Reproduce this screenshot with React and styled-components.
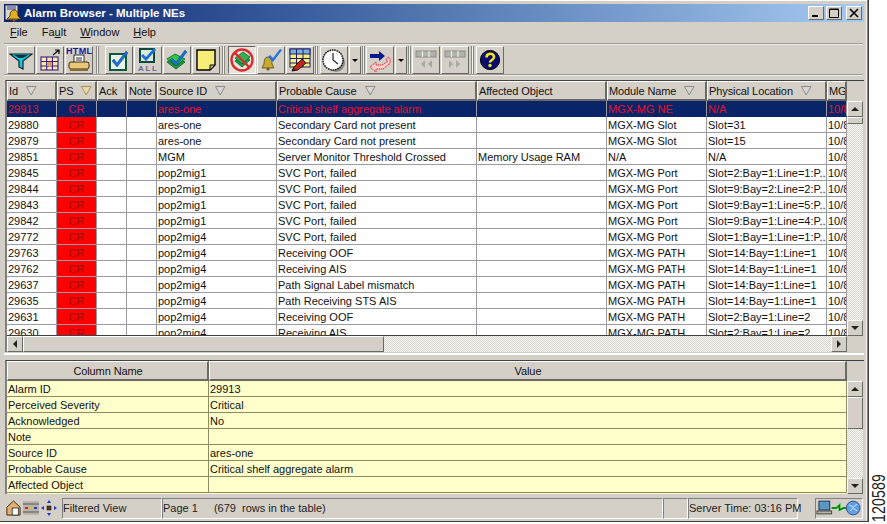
import React from 'react';
import styled, { createGlobalStyle } from 'styled-components';

const GlobalStyle = createGlobalStyle`
   html, body {
      margin: 0;
      padding: 0;
      background: #fff;
   }
   body {
      font-family: "Liberation Sans", Arial, sans-serif;
      font-size: 11px;
   }
`;

const FACE = '#d4d0c8';
const HATCH = `repeating-conic-gradient(${FACE} 0 25%, #fff 0 50%) 0 0 / 2px 2px`;
const RAISED = `
   border-style: solid;
   border-width: 1px;
   border-color: #fff #6a6a64 #6a6a64 #fff;
`;

const Page = styled.div`
   width: 887px;
   height: 524px;
   display: flex;
   align-items: flex-start;
   overflow: hidden;
   background: #fff;
`;

const Window = styled.div`
   width: 869px;
   height: 522px;
   box-sizing: border-box;
   flex: none;
   display: flex;
   flex-direction: column;
   background: ${FACE};
   padding: 4px 4px 0 4px;
   border-right: 1px solid #404040;
   border-bottom: 1px solid #404040;
   box-shadow: inset -1px 0 0 #808080, inset -2px 0 0 #f2f0ea, inset 0 1px 0 #ffffff;
`;

const SideNumber = styled.div`
   flex: 1;
   height: 524px;
   display: flex;
   align-items: flex-end;
   justify-content: center;
   padding-bottom: 2px;
   box-sizing: border-box;
   font-size: 14px;
   letter-spacing: 0.2px;
   color: #222;
   span {
      writing-mode: vertical-rl;
      transform: rotate(180deg) scaleX(1.3);
   }
`;

const TitleBar = styled.div`
   height: 18px;
   flex: none;
   display: flex;
   align-items: center;
   gap: 2px;
   padding: 0 2px 0 1px;
   background: linear-gradient(90deg, #0a246a 0%, #3a5f9e 35%, #a6caf0 100%);
   color: #fff;
   font-size: 11.5px;
   font-weight: bold;
`;

const TitleText = styled.span`
   flex: 1;
   white-space: nowrap;
`;

const WinButton = styled.div`
   width: 16px;
   height: 14px;
   box-sizing: border-box;
   margin-left: ${(p) => (p.$gap ? '2px' : '0')};
   background: ${FACE};
   ${RAISED}
   display: flex;
   align-items: center;
   justify-content: center;
`;

const MenuBar = styled.div`
   height: 21px;
   flex: none;
   display: flex;
   align-items: center;
   gap: 14px;
   padding: 0 0 1px 6px;
   box-sizing: border-box;
   font-size: 11px;
   color: #111;
   u { text-decoration: underline; }
`;

const Toolbar = styled.div`
   height: 33px;
   flex: none;
   box-sizing: border-box;
   display: flex;
   align-items: center;
   padding: 1px 0 0 3px;
   gap: 1px;
   border-top: 2px groove #efede8;
   border-bottom: 2px groove #efede8;
   margin-right: 1px;
`;

const ToolButton = styled.div`
   width: 28px;
   height: 28px;
   box-sizing: border-box;
   flex: none;
   display: flex;
   align-items: center;
   justify-content: center;
   ${RAISED}
   ${(p) => p.$pressed && `
      border-color: #6a6a64 #fff #fff #6a6a64;
      background: #e6e3dd;
   `}
`;

const DropButton = styled.div`
   width: 12px;
   height: 28px;
   box-sizing: border-box;
   flex: none;
   display: flex;
   align-items: center;
   justify-content: center;
   ${RAISED}
   &::after {
      content: '';
      border-left: 3px solid transparent;
      border-right: 3px solid transparent;
      border-top: 3px solid #000;
   }
`;

const ToolSep = styled.div`
   width: 3px;
   height: 28px;
   flex: none;
   box-sizing: border-box;
   margin: 0 ${(p) => p.$right}px 0 ${(p) => p.$left}px;
   background: #f4f2ee;
   border-left: 1px solid #8a8a84;
   border-right: 1px solid #8a8a84;
`;

const Panel = styled.div`
   flex: none;
   height: ${(p) => p.$height}px;
   display: grid;
   grid-template-columns: 840px 16px;
   grid-template-rows: ${(p) => p.$rows};
   margin-top: ${(p) => p.$top}px;
   margin-left: 1px;
   border-top: 1px solid #404040;
   border-left: 2px solid #808080;
   box-sizing: border-box;
`;

const Header = styled.div`
   display: grid;
   grid-template-columns: ${(p) => p.$cols};
   height: 20px;
   background: ${FACE};
`;

const HeadCell = styled.div`
   box-sizing: border-box;
   height: 20px;
   display: flex;
   align-items: center;
   justify-content: ${(p) => (p.$center ? 'center' : 'flex-start')};
   gap: 8px;
   padding-left: 1px;
   white-space: nowrap;
   overflow: hidden;
   color: #111;
   font-size: 11px;
   letter-spacing: -0.1px;
   ${RAISED}
   border-width: 1px 2px 2px 1px;
`;

const Corner = styled.div`
   background: ${FACE};
`;

const Body = styled.div`
   overflow: hidden;
   background: ${(p) => (p.$note ? '#ffffcc' : '#fff')};
   border-bottom: ${(p) => (p.$note ? '0' : '1px solid #404040')};
`;

const Row = styled.div`
   display: grid;
   grid-template-columns: ${(p) => p.$cols};
   height: 16px;
   box-sizing: border-box;
   background: ${(p) => (p.$selected ? '#0a246a' : 'transparent')};
   color: ${(p) => (p.$selected ? '#e8102c' : '#111')};
`;

const Cell = styled.div`
   box-sizing: border-box;
   height: 16px;
   line-height: 16px;
   padding-left: 1px;
   white-space: nowrap;
   overflow: hidden;
   border-right: 1px solid ${(p) => (p.$note ? '#8c8c66' : '#9a9aa0')};
   border-bottom: 1px solid ${(p) => (p.$note ? '#8c8c66' : '#9a9aa0')};
   ${(p) => p.$severity && `
      text-align: center;
      padding-left: 0;
      background: ${p.$selected ? 'transparent' : '#ff0000'};
      color: ${p.$selected ? '#e8102c' : '#980c0c'};
   `}
   ${(p) => p.$selected && !p.$note && 'border-bottom-color: #0a246a;'}
`;

const VScroll = styled.div`
   display: flex;
   flex-direction: column;
   background: ${HATCH};
`;

const ScrollBtn = styled.div`
   flex: none;
   width: ${(p) => p.$w || 16}px;
   height: ${(p) => p.$h || 16}px;
   box-sizing: border-box;
   background: ${FACE};
   ${RAISED}
   display: flex;
   align-items: center;
   justify-content: center;
`;

const Thumb = styled.div`
   flex: none;
   box-sizing: border-box;
   background: ${FACE};
   ${RAISED}
   width: ${(p) => p.$w}px;
   height: ${(p) => p.$h}px;
`;

const Spacer = styled.div`
   flex: 1;
`;

const HScroll = styled.div`
   grid-column: 1 / span 2;
   display: flex;
   height: 16px;
   width: 840px;
   background: ${HATCH};
`;

const Splitter = styled.div`
   flex: none;
   height: 7px;
   margin-top: 1px;
   background: ${FACE};
   border-top: 2px solid #fff;
   box-sizing: border-box;
`;

const StatusBar = styled.div`
   flex: none;
   height: 24px;
   margin-top: 2px;
   display: flex;
   align-items: center;
   color: #222;
   font-size: 11px;
`;

const StatusIcons = styled.div`
   width: 58px;
   flex: none;
   display: flex;
   align-items: center;
   gap: 2px;
   padding-left: 2px;
   box-sizing: border-box;
`;

const StatusCell = styled.div`
   height: 21px;
   box-sizing: border-box;
   flex: none;
   width: ${(p) => p.$w}px;
   margin-right: ${(p) => p.$gap || 0}px;
   display: flex;
   align-items: center;
   gap: 16px;
   white-space: pre;
   border-style: solid;
   border-width: 1px;
   border-color: #808080 #fff #fff #808080;
`;

const Arrow = ({ dir, color = '#222' }) => {
   const pts = {
      up: '4,2 8,6 0,6',
      down: '0,2 8,2 4,6',
      left: '6,0 6,8 2,4',
      right: '2,0 2,8 6,4',
   };
   return (
      <svg width="8" height="8" viewBox="0 0 8 8">
         <polygon points={pts[dir]} fill={color} />
      </svg>
   );
};

const SortMark = ({ on }) => (
   <svg width="11" height="10" viewBox="0 0 11 10">
      <polygon points="0.5,0.5 10,0.5 5.2,9" fill={on ? '#ecd9a8' : '#d8d6d2'} stroke={on ? '#a8905a' : '#8c8c8c'} strokeWidth="1" />
   </svg>
);

/* toolbar drawings */
const Icon = ({ children, w = 24, h = 24 }) => (
   <svg width={w} height={h} viewBox="0 0 24 24">{children}</svg>
);

const Check = ({ color = '#1a6fd0', x = 0, y = 0 }) => (
   <path transform={`translate(${x} ${y})`} d="M7 11l3 4 9-12 2 2-11 14-5-6z" fill={color} stroke="#10408a" strokeWidth="0.5" />
);

const TOOL_ICONS = {
   filter: (
      <Icon>
         <path d="M1 6h22l-9 7v8l-4-2v-6z" fill="#18c8d8" stroke="#0a2030" strokeWidth="1.2" />
         <path d="M5 7h14l-5 3H10z" fill="#0a3040" />
      </Icon>
   ),
   grid: (
      <Icon>
         <rect x="3" y="9" width="17" height="13" fill="#f8eaa8" stroke="#3a1a80" strokeWidth="1.1" />
         <path d="M3 13.5h17M3 18h17M8.700 9v13M14.400 9v13" stroke="#3a1a80" strokeWidth="1.1" />
         <rect x="9" y="14" width="5" height="4" fill="#e89a60" />
         <path d="M15 7l6-5m-4 0h4v4" fill="none" stroke="#000" strokeWidth="1.200" />
      </Icon>
   ),
   html: (
      <svg width="26" height="26" viewBox="0 0 26 26">
         <text x="0" y="7" fontFamily="Liberation Sans" fontSize="9" fontWeight="bold" fill="#1a1a9a" textLength="26">HTML</text>
         <rect x="8" y="8" width="10" height="9" fill="#fff" stroke="#000" strokeWidth="0.8" />
         <path d="M10 11h6M10 13h6" stroke="#000" strokeWidth="0.8" />
         <rect x="3" y="15" width="20" height="7" rx="2" fill="#e8c878" stroke="#3a2a10" strokeWidth="1" />
         <rect x="4" y="22" width="18" height="2" fill="#8a6a30" />
      </svg>
   ),
   ack: (
      <Icon>
         <rect x="3" y="6" width="16" height="16" fill="#e8f2ea" stroke="#0a5a3a" strokeWidth="2" />
         <Check x="0" y="0" />
      </Icon>
   ),
   ackAll: (
      <svg width="24" height="26" viewBox="0 0 24 26">
         <rect x="4" y="2" width="14" height="13" fill="#dde8e0" stroke="#0a4a3a" strokeWidth="2" />
         <path d="M7 7l3 3 8-9 2 2-10 11-5-5z" fill="#1a6fd0" />
         <text x="2" y="24" fontFamily="Liberation Sans" fontSize="8" fontWeight="bold" fill="#5a6a98" textLength="19">ALL</text>
      </svg>
   ),
   stack: (
      <Icon>
         <path d="M2 14l8-5 10 5-9 7z" fill="#18a030" stroke="#0a5a1a" strokeWidth="0.8" />
         <path d="M2 11l8-5 10 5-9 7z" fill="#30c840" stroke="#0a5a1a" strokeWidth="0.8" />
         <path d="M7 10l4 4 9-12 2 2-11 14-6-6z" fill="#1a6fd0" stroke="#10408a" strokeWidth="0.4" />
      </Icon>
   ),
   note: (
      <Icon>
         <path d="M3 2h18v15l-5 5H3z" fill="#f6ee78" stroke="#000" strokeWidth="1.4" />
         <path d="M16 22v-5h5z" fill="#c8c060" stroke="#000" strokeWidth="1" />
      </Icon>
   ),
   ban: (
      <svg width="26" height="26" viewBox="0 0 26 26">
         <path d="M6 14l8-7 7 6-8 7z" fill="#18a040" stroke="#0a5a2a" strokeWidth="0.8" />
         <path d="M6 11l8-6 7 5-8 7z" fill="#30b050" stroke="#0a5a2a" strokeWidth="0.8" />
         <circle cx="13" cy="13" r="10.500" fill="none" stroke="#d82c2c" strokeWidth="2.400" />
         <path d="M5.600 5.600l14.800 14.800" stroke="#d82c2c" strokeWidth="2.200" />
      </svg>
   ),
   bellCheck: (
      <Icon>
         <path d="M9 9c3 0 4 3 4 7l2 4H3l2-4c0-4 1-7 4-7z" fill="#c8a830" stroke="#5a4a10" strokeWidth="0.8" />
         <circle cx="9" cy="21" r="1.600" fill="#6a5a18" />
         <path d="M11 7l3 3 7-9 2 1-9 12-5-5z" fill="#2a72d8" />
      </Icon>
   ),
   table: (
      <Icon>
         <rect x="2" y="1" width="20" height="18" fill="#f4ee80" stroke="#202060" strokeWidth="1" />
         <rect x="2" y="1" width="20" height="5" fill="#7ab0e0" stroke="#202060" strokeWidth="1" />
         <path d="M8.500 1v18M15 1v18M2 10.500h20M2 15h20" stroke="#202060" strokeWidth="1" />
         <path d="M4 23l2-4 8-8 4 4-8 7z" fill="#c02818" stroke="#000" strokeWidth="0.8" />
         <path d="M4 23l1.500-3 2 2z" fill="#111" />
      </Icon>
   ),
   clock: (
      <svg width="26" height="26" viewBox="0 0 26 26">
         <circle cx="15" cy="16" r="9" fill="#8a8a84" />
         <circle cx="12" cy="13" r="10" fill="#fff" stroke="#111" strokeWidth="1.500" strokeDasharray="1.600 0.800" />
         <path d="M12 6v7l5 4" fill="none" stroke="#222" strokeWidth="1.200" />
      </svg>
   ),
   redo: (
      <Icon>
         <path d="M2 6h9V3l6 5-6 5v-3H2z" fill="#0a1a8a" />
         <path d="M20 9c3 1 3 5 1 7l-6 5H8v3l-6-5 6-5v3h6l5-3c1-1 0-2-1-2z" fill="#fbd0d0" stroke="#e02020" strokeWidth="1" strokeDasharray="1.400 0.700" />
      </Icon>
   ),
   prev: (
      <Icon>
         <rect x="2" y="3" width="20" height="6" fill="#b4b2ac" stroke="#8a8a84" />
         <path d="M8.500 3v6M15 3v6" stroke="#f0eee8" strokeWidth="1.200" />
         <path d="M11 12v8l-4-4zM18 12v8l-4-4z" fill="#a8a8a2" />
      </Icon>
   ),
   next: (
      <Icon>
         <rect x="2" y="3" width="20" height="6" fill="#b4b2ac" stroke="#8a8a84" />
         <path d="M8.500 3v6M15 3v6" stroke="#f0eee8" strokeWidth="1.200" />
         <path d="M6 12v8l4-4zM13 12v8l4-4z" fill="#a8a8a2" />
      </Icon>
   ),
   help: (
      <svg width="22" height="22" viewBox="0 0 22 22">
         <circle cx="11" cy="11" r="9.600" fill="#0a0a70" stroke="#000" strokeWidth="1" />
         <path d="M7.500 8.500c0-5 7.500-5 7.500-.5 0 3-4 3-4 5.500" fill="none" stroke="#f4e818" strokeWidth="2.600" />
         <circle cx="11" cy="16.500" r="1.700" fill="#f4e818" />
      </svg>
   ),
};

const TOOLBAR = [
   ['filter', 'grid', 'html'],
   ['ack', 'ackAll', 'stack', 'note'],
   ['ban', 'bellCheck', 'table'],
   ['clock', 'drop'],
   ['redo', 'drop'],
   ['prev', 'next'],
   ['help'],
];

// space before and after each toolbar separator
const SEPS = [[2, 5], [1, 2], [0, 1], [0, 0], [0, 0], [1, 1]];

const COLS = '50px 40px 30px 30px 120px 200px 130px 100px 120px 20px';
const HEADERS = [
   ['Id', 1], ['PS', 2], ['Ack'], ['Note'], ['Source ID', 1], ['Probable Cause', 1],
   ['Affected Object'], ['Module Name', 1], ['Physical Location', 1], ['MGM'],
];

const ROWS = [
   ['29913', 'CR', '', '', 'ares-one', 'Critical shelf aggregate alarm', '', 'MGX-MG NE', 'N/A'],
   ['29880', 'CR', '', '', 'ares-one', 'Secondary Card not present', '', 'MGX-MG Slot', 'Slot=31'],
   ['29879', 'CR', '', '', 'ares-one', 'Secondary Card not present', '', 'MGX-MG Slot', 'Slot=15'],
   ['29851', 'CR', '', '', 'MGM', 'Server Monitor Threshold Crossed', 'Memory Usage RAM', 'N/A', 'N/A'],
   ['29845', 'CR', '', '', 'pop2mig1', 'SVC Port, failed', '', 'MGX-MG Port', 'Slot=2:Bay=1:Line=1:P...'],
   ['29844', 'CR', '', '', 'pop2mig1', 'SVC Port, failed', '', 'MGX-MG Port', 'Slot=9:Bay=2:Line=2:P...'],
   ['29843', 'CR', '', '', 'pop2mig1', 'SVC Port, failed', '', 'MGX-MG Port', 'Slot=9:Bay=1:Line=5:P...'],
   ['29842', 'CR', '', '', 'pop2mig1', 'SVC Port, failed', '', 'MGX-MG Port', 'Slot=9:Bay=1:Line=4:P...'],
   ['29772', 'CR', '', '', 'pop2mig4', 'SVC Port, failed', '', 'MGX-MG Port', 'Slot=1:Bay=1:Line=1:P...'],
   ['29763', 'CR', '', '', 'pop2mig4', 'Receiving OOF', '', 'MGX-MG PATH', 'Slot=14:Bay=1:Line=1'],
   ['29762', 'CR', '', '', 'pop2mig4', 'Receiving AIS', '', 'MGX-MG PATH', 'Slot=14:Bay=1:Line=1'],
   ['29637', 'CR', '', '', 'pop2mig4', 'Path Signal Label mismatch', '', 'MGX-MG PATH', 'Slot=14:Bay=1:Line=1'],
   ['29635', 'CR', '', '', 'pop2mig4', 'Path Receiving STS AIS', '', 'MGX-MG PATH', 'Slot=14:Bay=1:Line=1'],
   ['29631', 'CR', '', '', 'pop2mig4', 'Receiving OOF', '', 'MGX-MG PATH', 'Slot=2:Bay=1:Line=2'],
   ['29630', 'CR', '', '', 'pop2mig4', 'Receiving AIS', '', 'MGX-MG PATH', 'Slot=2:Bay=1:Line=2'],
];

const DETAIL_COLS = '202px 638px';
const DETAILS = [
   ['Alarm ID', '29913'],
   ['Perceived Severity', 'Critical'],
   ['Acknowledged', 'No'],
   ['Note', ''],
   ['Source ID', 'ares-one'],
   ['Probable Cause', 'Critical shelf aggregate alarm'],
   ['Affected Object', ''],
];

function App() {
   return (
      <Page>
         <GlobalStyle />
         <Window>
            <TitleBar>
               <svg width="17" height="17" viewBox="0 0 17 17">
                  <rect x="0" y="0" width="13" height="15" fill="#d8d8c8" stroke="#1a1a4a" />
                  <path d="M2 2h9M2 4h9" stroke="#3a3a9a" strokeWidth="1.200" />
                  <path d="M9 5c3 0 4 3 4 6l3 3H2l3-3c0-3 1-6 4-6z" fill="#e0b020" stroke="#3a2a00" strokeWidth="0.800" />
                  <circle cx="9" cy="15.500" r="1.400" fill="#7a5a10" />
               </svg>
               <TitleText>Alarm Browser - Multiple NEs</TitleText>
               <WinButton>
                  <svg width="10" height="10" viewBox="0 0 10 10"><rect x="1" y="7" width="6" height="2" fill="#000" /></svg>
               </WinButton>
               <WinButton>
                  <svg width="10" height="10" viewBox="0 0 10 10"><path d="M0.500 1.500h9v8h-9z M0.500 1h9" fill="none" stroke="#000" /></svg>
               </WinButton>
               <WinButton $gap>
                  <svg width="10" height="10" viewBox="0 0 10 10"><path d="M1 1l8 8M9 1l-8 8" stroke="#000" strokeWidth="1.600" /></svg>
               </WinButton>
            </TitleBar>
            <MenuBar>
               <span><u>F</u>ile</span>
               <span>Fa<u>u</u>lt</span>
               <span><u>W</u>indow</span>
               <span><u>H</u>elp</span>
            </MenuBar>
            <Toolbar>
               {TOOLBAR.map((group, i) => (
                  <React.Fragment key={i}>
                     {i > 0 && <ToolSep $left={SEPS[i - 1][0]} $right={SEPS[i - 1][1]} />}
                     {group.map((name, j) => (
                        name === 'drop'
                           ? <DropButton key={j} />
                           : <ToolButton key={j} $pressed={name === 'ban'}>{TOOL_ICONS[name]}</ToolButton>
                     ))}
                  </React.Fragment>
               ))}
            </Toolbar>
            <Panel $height={272} $top={4} $rows="20px 235px 16px">
               <Header $cols={COLS}>
                  {HEADERS.map(([label, sort]) => (
                     <HeadCell key={label}>
                        {label}
                        {sort && <SortMark on={sort === 2} />}
                     </HeadCell>
                  ))}
               </Header>
               <Corner />
               <Body>
                  {ROWS.map((row, i) => (
                     <Row key={row[0]} $cols={COLS} $selected={i === 0}>
                        {row.map((value, k) => (
                           <Cell key={k} $severity={k === 1} $selected={i === 0}>{value}</Cell>
                        ))}
                        <Cell $selected={i === 0}>10/8</Cell>
                     </Row>
                  ))}
               </Body>
               <VScroll>
                  <ScrollBtn><Arrow dir="up" /></ScrollBtn>
                  <Thumb $w={16} $h={7} />
                  <Spacer />
                  <ScrollBtn><Arrow dir="down" /></ScrollBtn>
               </VScroll>
               <HScroll>
                  <ScrollBtn><Arrow dir="left" /></ScrollBtn>
                  <Thumb $w={361} $h={16} />
                  <Spacer />
                  <ScrollBtn><Arrow dir="right" /></ScrollBtn>
               </HScroll>
            </Panel>
            <Splitter />
            <Panel $height={134} $top={0} $rows="20px 113px">
               <Header $cols={DETAIL_COLS}>
                  <HeadCell $center>Column Name</HeadCell>
                  <HeadCell $center>Value</HeadCell>
               </Header>
               <Corner />
               <Body $note>
                  {DETAILS.map(([name, value]) => (
                     <Row key={name} $cols={DETAIL_COLS}>
                        <Cell $note>{name}</Cell>
                        <Cell $note>{value}</Cell>
                     </Row>
                  ))}
               </Body>
               <VScroll>
                  <ScrollBtn><Arrow dir="up" /></ScrollBtn>
                  <Thumb $w={16} $h={32} />
                  <Spacer />
                  <ScrollBtn><Arrow dir="down" /></ScrollBtn>
               </VScroll>
            </Panel>
            <StatusBar>
               <StatusIcons>
                  <svg width="15" height="18" viewBox="0 0 17 18">
                     <path d="M8.500 1L16 8v9H1V8z" fill="#e0b070" stroke="#3a1a00" />
                     <rect x="7" y="9" width="7" height="8" fill="#fff" stroke="#333" />
                  </svg>
                  <svg width="16" height="14" viewBox="0 0 16 14">
                     <rect x="0" y="0" width="16" height="14" fill="#b8b4ac" />
                     <path d="M0 3h16M0 11h16" stroke="#555" />
                     <path d="M2 7h3" stroke="#e02020" strokeWidth="2" />
                     <path d="M6.500 7h3" stroke="#e0c020" strokeWidth="2" />
                     <path d="M11 7h3" stroke="#2040c0" strokeWidth="2" />
                  </svg>
                  <svg width="16" height="16" viewBox="0 0 16 16">
                     <rect x="6" y="6" width="4" height="4" fill="#5a3a20" stroke="#000" strokeWidth="0.500" />
                     <path d="M8 0l2 3H6zM8 16l2-3H6zM0 8l3-2v4zM16 8l-3-2v4z" fill="#2030e0" />
                  </svg>
               </StatusIcons>
               <StatusCell $w={100}>Filtered View</StatusCell>
               <StatusCell $w={501}><span>Page 1</span><span>(679  rows in the table)</span></StatusCell>
               <StatusCell $w={25} />
               <StatusCell $w={110} $gap={17}>Server Time: 03:16 PM</StatusCell>
               <StatusCell $w={48}>
                  <svg width="45" height="17" viewBox="0 0 46 17">
                     <rect x="3" y="1" width="11" height="9" fill="#5a98c8" stroke="#22324a" />
                     <rect x="1" y="11" width="15" height="3" fill="#b8b4a0" stroke="#444" />
                     <path d="M16 8h5l3-3v5l4-2h4" fill="none" stroke="#10c020" strokeWidth="2" />
                     <path d="M16 8h5l3-3v5l4-2h4" fill="none" stroke="#000" strokeWidth="0.500" />
                     <circle cx="38" cy="8" r="7" fill="#60a0e8" stroke="#30508a" />
                     <path d="M34 5l4 2 4-3M35 11l3-3 4 3" stroke="#d8e8f8" fill="none" />
                  </svg>
               </StatusCell>
            </StatusBar>
         </Window>
         <SideNumber><span>120589</span></SideNumber>
      </Page>
   );
}

export default App;
